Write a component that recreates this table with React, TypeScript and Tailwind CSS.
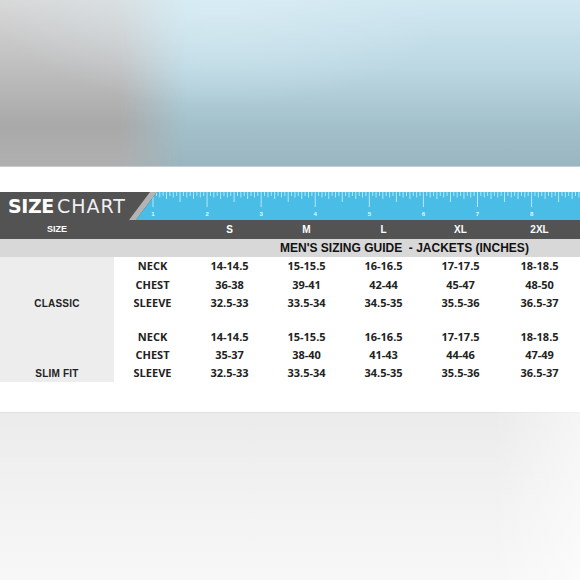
import React from "react";

const cols = "grid grid-cols-[114px_77px_77px_77px_77px_77px_81px]";

function Ruler() {
  const ticks: React.ReactNode[] = [];
  for (let j = -3; j <= 16 * 8 + 14; j++) {
    const x = 153 + j * 3.38;
    let len = 4;
    if (j % 16 === 0) len = 15;
    else if (j % 8 === 0) len = 10;
    else if (j % 4 === 0) len = 7;
    else if (j % 2 === 0) len = 5.5;
    ticks.push(
      <line key={j} x1={x} x2={x} y1={0} y2={len} stroke="#c4ecfa" strokeWidth={0.9} />
    );
  }
  const nums = [1, 2, 3, 4, 5, 6, 7, 8];
  return (
    <svg width={452} height={28} viewBox="128 0 452 28" className="block shrink-0">
      <defs>
        <clipPath id="blueClip">
          <polygon points="157,0 580,0 580,28 136,28" />
        </clipPath>
      </defs>
      <polygon points="150,0 157,0 136,28 129,28" fill="#b3b3b3" />
      <polygon points="157,0 580,0 580,28 136,28" fill="#49bde6" />
      <g clipPath="url(#blueClip)">{ticks}</g>
      {nums.map((n) => (
        <text
          key={n}
          x={153 + (n - 1) * 54.08}
          y={23.5}
          textAnchor="middle"
          fontSize={6}
          fontWeight={700}
          fill="#e6f7fd"
          fontFamily="'Liberation Sans', Arial, sans-serif"
        >
          {n}
        </text>
      ))}
    </svg>
  );
}

type Row = { label?: string; meas: string; vals: string[]; h: string };

const rows: (Row | null)[] = [
  { meas: "NECK", vals: ["14-14.5", "15-15.5", "16-16.5", "17-17.5", "18-18.5"], h: "h-[19px]" },
  { meas: "CHEST", vals: ["36-38", "39-41", "42-44", "45-47", "48-50"], h: "h-[18px]" },
  { label: "CLASSIC", meas: "SLEEVE", vals: ["32.5-33", "33.5-34", "34.5-35", "35.5-36", "36.5-37"], h: "h-[18px]" },
  null,
  { meas: "NECK", vals: ["14-14.5", "15-15.5", "16-16.5", "17-17.5", "18-18.5"], h: "h-[18px]" },
  { meas: "CHEST", vals: ["35-37", "38-40", "41-43", "44-46", "47-49"], h: "h-[18px]" },
  { label: "SLIM FIT", meas: "SLEEVE", vals: ["32.5-33", "33.5-34", "34.5-35", "35.5-36", "36.5-37"], h: "h-[18px]" },
];

export default function App() {
  return (
    <div className="w-[580px] h-[580px] overflow-hidden flex flex-col bg-white">
      {/* top photo */}
      <div className="relative h-[167px] shrink-0 bg-[linear-gradient(to_bottom,#d1e8f1_0%,#bcd8e3_40%,#a3c1cb_75%,#9ab6c0_100%)]">
        <div className="absolute inset-0 bg-[linear-gradient(to_bottom,#d8d8d8_0%,#c2c2c2_35%,#a9a9a9_75%,#b0b0b0_100%)] [mask-image:linear-gradient(to_right,black_0%,black_21%,transparent_32%)]" />
        <div className="absolute inset-0 bg-[radial-gradient(ellipse_at_38%_0%,rgba(220,238,245,0.6),transparent_45%)]" />
        <div className="absolute left-0 right-0 bottom-0 h-px bg-[#c5cfd3]" />
      </div>
      <div className="h-[25px] shrink-0 bg-white" />

      {/* title band */}
      <div className="flex h-[28px] shrink-0 bg-[#535353]">
        <div className="w-[128px] shrink-0 flex items-center pl-[8px] gap-[3px] text-white leading-none font-['DejaVu_Sans',sans-serif] text-[19px]">
          <span className="font-bold tracking-[-0.4px]">SIZE</span>
          <span className="font-normal tracking-[1px] text-[#f0f0f0]">CHART</span>
        </div>
        <Ruler />
      </div>

      {/* header row */}
      <div className={`${cols} h-[19px] shrink-0 bg-[#535353] text-white font-bold font-['Liberation_Sans',Arial,sans-serif] items-center text-center`}>
        <div className="text-[9px]">SIZE</div>
        <div />
        <div className="text-[10px]">S</div>
        <div className="text-[10px]">M</div>
        <div className="text-[10px]">L</div>
        <div className="text-[10px]">XL</div>
        <div className="text-[10px]">2XL</div>
      </div>

      {/* guide row */}
      <div className="h-[18px] shrink-0 bg-[#d8d8d8] flex items-center pl-[280px] font-['Liberation_Sans',Arial,sans-serif] font-bold text-[12px] text-[#111] whitespace-pre leading-none">
        {"MEN'S SIZING GUIDE  - JACKETS (INCHES)"}
      </div>

      {/* body */}
      <div className="flex flex-col shrink-0">
        {rows.map((r, i) =>
          r === null ? (
            <div key={i} className={`${cols} h-[16px]`}>
              <div className="bg-[#ededed]" />
            </div>
          ) : (
            <div key={i} className={`${cols} ${r.h} items-stretch text-center`}>
              <div className="bg-[#ededed] flex items-center justify-center font-['Liberation_Sans',Arial,sans-serif] font-bold text-[10px] text-[#222] tracking-[0.2px]">
                {r.label ?? ""}
              </div>
              <div className="flex items-center justify-center font-['Open_Sans',sans-serif] font-bold text-[11px] text-[#222]">
                {r.meas}
              </div>
              {r.vals.map((v, k) => (
                <div key={k} className="flex items-center justify-center font-['Open_Sans',sans-serif] font-bold text-[11px] text-[#222]">
                  {v}
                </div>
              ))}
            </div>
          )
        )}
      </div>

      <div className="h-[30px] shrink-0 bg-white" />

      {/* bottom photo */}
      <div className="relative flex-1 bg-[linear-gradient(to_bottom,#ebebeb_0%,#f1f1f1_45%,#f7f7f7_100%)]">
        <div className="absolute left-0 right-0 top-0 h-px bg-[#e2e2e2]" />
        <div className="absolute inset-0 bg-[linear-gradient(to_right,rgba(255,255,255,0)_85%,rgba(255,255,255,0.5)_100%)]" />
      </div>
    </div>
  );
}
